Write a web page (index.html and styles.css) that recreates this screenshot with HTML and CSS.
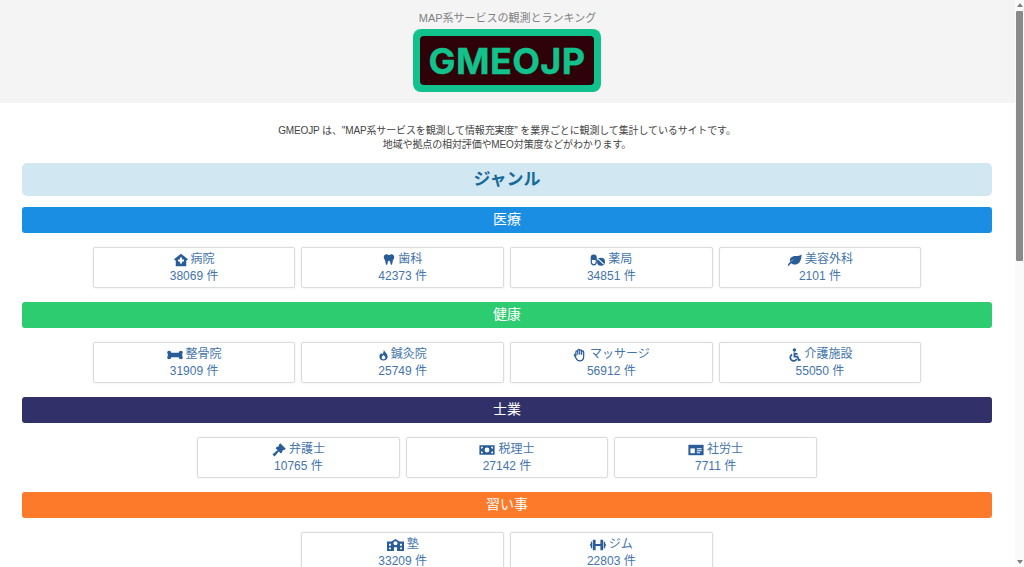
FILE: index.html
```html
<!DOCTYPE html>
<html lang="ja">
<head>
<meta charset="utf-8">
<title>GMEOJP</title>
<link rel="stylesheet" href="styles.css">
</head>
<body>
<div class="viewport">
<div class="page">
  <header class="site-header">
    <p class="tagline">MAP系サービスの観測とランキング</p>
    <div class="logo"><span class="logo-inner">GMEOJP</span></div>
  </header>
  <main class="content">
    <p class="intro">GMEOJP は、"MAP系サービスを観測して情報充実度" を業界ごとに観測して集計しているサイトです。<br>地域や拠点の相対評価やMEO対策度などがわかります。</p>
    <h1 class="genre-title">ジャンル</h1>

    <h2 class="band band-blue">医療</h2>
    <div class="cards">
      <a class="card"><span class="card-name"><svg class="icon" viewBox="0 0 16 16"><path d="M8 .8 16 7.200 14 8.800V15H2V8.800L0 7.200Z"/><path class="knock" d="M6.800 5.200H9.200V7.400H11.400V9.800H9.200V12H6.800V9.800H4.600V7.400H6.800Z"/></svg>病院</span><span>38069 件</span></a>
      <a class="card"><span class="card-name"><svg class="icon icon-narrow" viewBox="0 0 16 16"><path d="M4.500 1C6 1 6.800 2 8 2S10 1 11.500 1C13.800 1 15 3 15 5 15 7 13.500 8 13 10L12.200 14.300C12 15.400 10.600 15.400 10.300 14.300L9.400 10.500C9.200 9.400 6.800 9.400 6.600 10.500L5.700 14.300C5.400 15.400 4 15.400 3.800 14.300L3 10C2.500 8 1 7 1 5 1 3 2.200 1 4.500 1Z"/></svg>歯科</span><span>42373 件</span></a>
      <a class="card"><span class="card-name"><svg class="icon icon-wide" viewBox="0 0 18 16"><path d="M.8 5.200a3.700 3.700 0 0 1 7.400 0v5.600a3.700 3.700 0 0 1-7.400 0Z"/><path class="knock" d="M2.300 8H6.700V10.800a2.200 2.200 0 0 1-4.400 0Z"/><circle cx="13.200" cy="10" r="4.800"/><path class="knock-line" d="M10 7 16.400 13"/></svg>薬局</span><span>34851 件</span></a>
      <a class="card"><span class="card-name"><svg class="icon icon-wide" viewBox="0 0 18 16"><path d="M17.500 1C17.500 8 15 13.500 9 13.500 7.500 13.500 6 12.800 5 11.800 3.800 12.800 3 13.800 2.200 15.200L.8 14.400C2.500 11 5 9 9 7.500 7 7.800 5 9 3.600 10.200 2.500 6 6 3.200 10 3.200 13 3.200 15.800 2.800 17.500 1Z"/></svg>美容外科</span><span>2101 件</span></a>
    </div>

    <h2 class="band band-green">健康</h2>
    <div class="cards">
      <a class="card"><span class="card-name"><svg class="icon icon-xwide" viewBox="0 0 20 16"><path d="M2.500 2.800C4.200 2.800 5.200 3.800 5.400 5.200H14.600C14.800 3.800 15.800 2.800 17.500 2.800 19.300 2.800 20.300 4.800 19.300 6.200 18.900 6.800 18.900 9.200 19.300 9.800 20.300 11.200 19.300 13.200 17.500 13.200 15.800 13.200 14.800 12.200 14.600 10.800H5.400C5.200 12.200 4.200 13.200 2.500 13.200 .7 13.200-.3 11.200 .7 9.800 1.100 9.200 1.100 6.800 .7 6.200-.3 4.800 .7 2.800 2.500 2.800Z"/></svg>整骨院</span><span>31909 件</span></a>
      <a class="card"><span class="card-name"><svg class="icon icon-flame" viewBox="0 0 12 16"><path fill-rule="evenodd" d="M6.500.8C6.800 4 11.500 6 11.500 10.200 11.500 13.200 9 15.200 6 15.200S.5 13.200 .5 10.200C.5 8 1.800 6.500 3 5.300L4.500 7.200C5.400 5.500 6.500 3.500 6.500.8ZM6 8C4.800 9.400 3.500 10.300 3.500 11.500 3.500 12.800 4.600 13.500 6 13.500S8.500 12.800 8.500 11.500C8.500 10.300 7.200 9.400 6 8Z"/></svg>鍼灸院</span><span>25749 件</span></a>
      <a class="card"><span class="card-name"><svg class="icon icon-line" viewBox="0 0 16 16"><path d="M3.300 9V5.500M3.300 7V4.500C3.300 3 5.500 3 5.500 4.500V7M5.500 4.500V2.700C5.500 1.200 7.700 1.200 7.700 2.700V7M7.700 3.200C7.700 1.700 9.900 1.700 9.900 3.200V7M9.900 4.500C9.900 3 12.200 3 12.200 4.500V9.500C12.200 12.800 10.200 14.800 7.800 14.800 5.500 14.800 4.300 13.500 3.300 11.500L1.700 8.600C1 7.300 2.700 6.200 3.600 7.500"/></svg>マッサージ</span><span>56912 件</span></a>
      <a class="card"><span class="card-name"><svg class="icon" viewBox="0 0 16 16"><circle cx="8.500" cy="2.200" r="2"/><path class="icon-stroke" d="M8.500 5V9.800H12L13.500 13.800 15.500 13.200M8.500 6.800H12"/><path class="icon-stroke" d="M5.900 7.400A3.900 3.900 0 1 0 11.200 12.500"/></svg>介護施設</span><span>55050 件</span></a>
    </div>

    <h2 class="band band-navy">士業</h2>
    <div class="cards">
      <a class="card"><span class="card-name"><svg class="icon" viewBox="0 0 16 16"><path d="M9.500.3 15.700 6.500 13.800 8.400 13.200 7.800 11.500 9.500 12 10 10.100 11.900 4.100 5.900 6 4 6.500 4.500 8.200 2.800 7.600 2.200ZM6.200 8.200 7.800 9.800 3 15.500.5 13Z"/></svg>弁護士</span><span>10765 件</span></a>
      <a class="card"><span class="card-name"><svg class="icon icon-xwide" viewBox="0 0 20 16"><path fill-rule="evenodd" d="M.5 2H19.500V14H.5ZM10 5A3 3 0 1 0 10 11 3 3 0 1 0 10 5ZM2.500 4V6.500A2.500 2.500 0 0 0 5 4ZM15 4A2.500 2.500 0 0 0 17.500 6.500V4ZM2.500 9.500V12H5A2.500 2.500 0 0 0 2.500 9.500ZM17.500 9.500A2.500 2.500 0 0 0 15 12H17.500Z"/></svg>税理士</span><span>27142 件</span></a>
      <a class="card"><span class="card-name"><svg class="icon icon-xwide" viewBox="0 0 20 16"><path d="M.5 1.500H19.500V14.500H.5Z"/><rect class="knock" x="3" y="6" width="5.500" height="6"/><path class="knock-line" d="M11 6.500H17M11 9H17M11 11.500H15"/></svg>社労士</span><span>7711 件</span></a>
    </div>

    <h2 class="band band-orange">習い事</h2>
    <div class="cards">
      <a class="card"><span class="card-name"><svg class="icon icon-school" viewBox="0 0 20 16"><path fill-rule="evenodd" d="M10 .8 14.800 3.800H20V15.200H0V3.800H5.200ZM10 3.600A2.400 2.400 0 1 0 10 8.400 2.400 2.400 0 1 0 10 3.600ZM8.200 10.500V15.200H11.800V10.500ZM2.400 6.500V8.800H4.600V6.500ZM15.400 6.500V8.800H17.600V6.500ZM2.400 10.800V13H4.600V10.800ZM15.400 10.800V13H17.600V10.800Z"/></svg>塾</span><span>33209 件</span></a>
      <a class="card"><span class="card-name"><svg class="icon icon-xwide" viewBox="0 0 20 16"><path d="M3.600 1.500H7V14.500H3.600ZM7 6.600H13V9.400H7ZM13 1.500H16.400V14.500H13ZM1 4H2.800V12H1ZM17.200 4H19V12H17.200ZM0 7H1V9H0ZM19 7H20V9H19Z"/></svg>ジム</span><span>22803 件</span></a>
    </div>
  </main>
</div>
<div class="scrollbar">
  <span class="arrow-up"></span>
  <span class="thumb"></span>
  <span class="track"></span>
  <span class="arrow-down"></span>
</div>
</div>
</body>
</html>
```
FILE: styles.css
```css
html, body {
  margin: 0;
  height: 100%;
  overflow: hidden;
  background: #fff;
}
body {
  font-family: "Liberation Sans", "Noto Sans CJK JP", sans-serif;
  color: #444;
}
.viewport {
  display: flex;
  height: 567px;
  overflow: hidden;
}
.page {
  flex: 1;
  min-width: 0;
  overflow: hidden;
}
.site-header {
  height: 103px;
  box-sizing: border-box;
  padding-top: 11px;
  background: #f4f4f4;
  display: flex;
  flex-direction: column;
  align-items: center;
}
.tagline {
  margin: 0 0 3px;
  font-size: 11px;
  line-height: 15px;
  color: #808080;
}
.logo {
  box-sizing: border-box;
  width: 188px;
  height: 63px;
  margin-right: 1px;
  padding: 7px;
  border-radius: 8px;
  background: #12c28c;
}
.logo-inner {
  display: flex;
  align-items: center;
  justify-content: center;
  height: 100%;
  border-radius: 4px;
  background: #2e0208;
  color: #12c28c;
  font-family: "Inter", sans-serif;
  font-weight: 700;
  font-size: 36px;
  letter-spacing: .4px;
  -webkit-text-stroke: .4px #12c28c;
}
.content {
  padding: 0 23px 0 22px;
}
.intro {
  margin: 21px 0 0;
  height: 39px;
  font-size: 10px;
  line-height: 14px;
  letter-spacing: -.13px;
  text-align: center;
  color: #444;
}
.genre-title {
  margin: 0 0 11px;
  height: 33px;
  line-height: 33px;
  border-radius: 5px;
  background: #d1e8f3;
  color: #17699b;
  font-size: 17px;
  font-weight: 700;
  text-align: center;
}
.band {
  margin: 0;
  height: 26px;
  line-height: 25px;
  border-radius: 3px;
  color: #fff;
  font-size: 14px;
  font-weight: 400;
  text-align: center;
}
.band-blue { background: #1a8ee3; }
.band-green { background: #2ecc71; }
.band-navy { background: #313069; }
.band-orange { background: #fd7a2a; }
.cards {
  display: flex;
  justify-content: center;
  gap: 6px;
  margin: 14px 0;
  height: 41px;
}
.card {
  box-sizing: border-box;
  width: 202.6px;
  height: 41px;
  padding-top: 3px;
  display: flex;
  flex-direction: column;
  align-items: center;
  border: 1px solid #dcdcdc;
  border-radius: 2px;
  box-shadow: 0 0 2px rgba(0, 0, 0, .1);
  color: #4474ab;
  font-size: 12px;
  line-height: 17px;
}
.card-name {
  display: flex;
  align-items: center;
  gap: 3px;
}
.icon {
  width: 14px;
  height: 14px;
  fill: #2a5d98;
  flex: none;
}
.icon-narrow { width: 12px; height: 13px; }
.icon-flame { width: 9px; height: 12px; }
.icon-wide { width: 15px; }
.icon-xwide { width: 16px; }
.icon-school { width: 17px; }
.icon-line {
  fill: none;
  stroke: #2a5d98;
  stroke-width: 1.4;
  stroke-linecap: round;
  stroke-linejoin: round;
}
.icon-stroke {
  fill: none;
  stroke: #2a5d98;
  stroke-width: 2;
}
.knock { fill: #fff; }
.knock-line {
  fill: none;
  stroke: #fff;
  stroke-width: 1.3;
}
.scrollbar {
  width: 9px;
  flex: none;
  display: flex;
  flex-direction: column;
  align-items: center;
  background: #fafafa;
}
.arrow-up, .arrow-down {
  flex: none;
  width: 0;
  height: 0;
  border-left: 3px solid transparent;
  border-right: 3px solid transparent;
}
.arrow-up {
  margin: 3px 0 4px;
  border-bottom: 4px solid #808080;
}
.arrow-down {
  margin: 4px 0 3px;
  border-top: 4px solid #808080;
}
.thumb {
  flex: none;
  width: 7px;
  height: 250px;
  background: #8a8a8a;
  border-radius: 1px;
}
.track { flex: 1; }
```
